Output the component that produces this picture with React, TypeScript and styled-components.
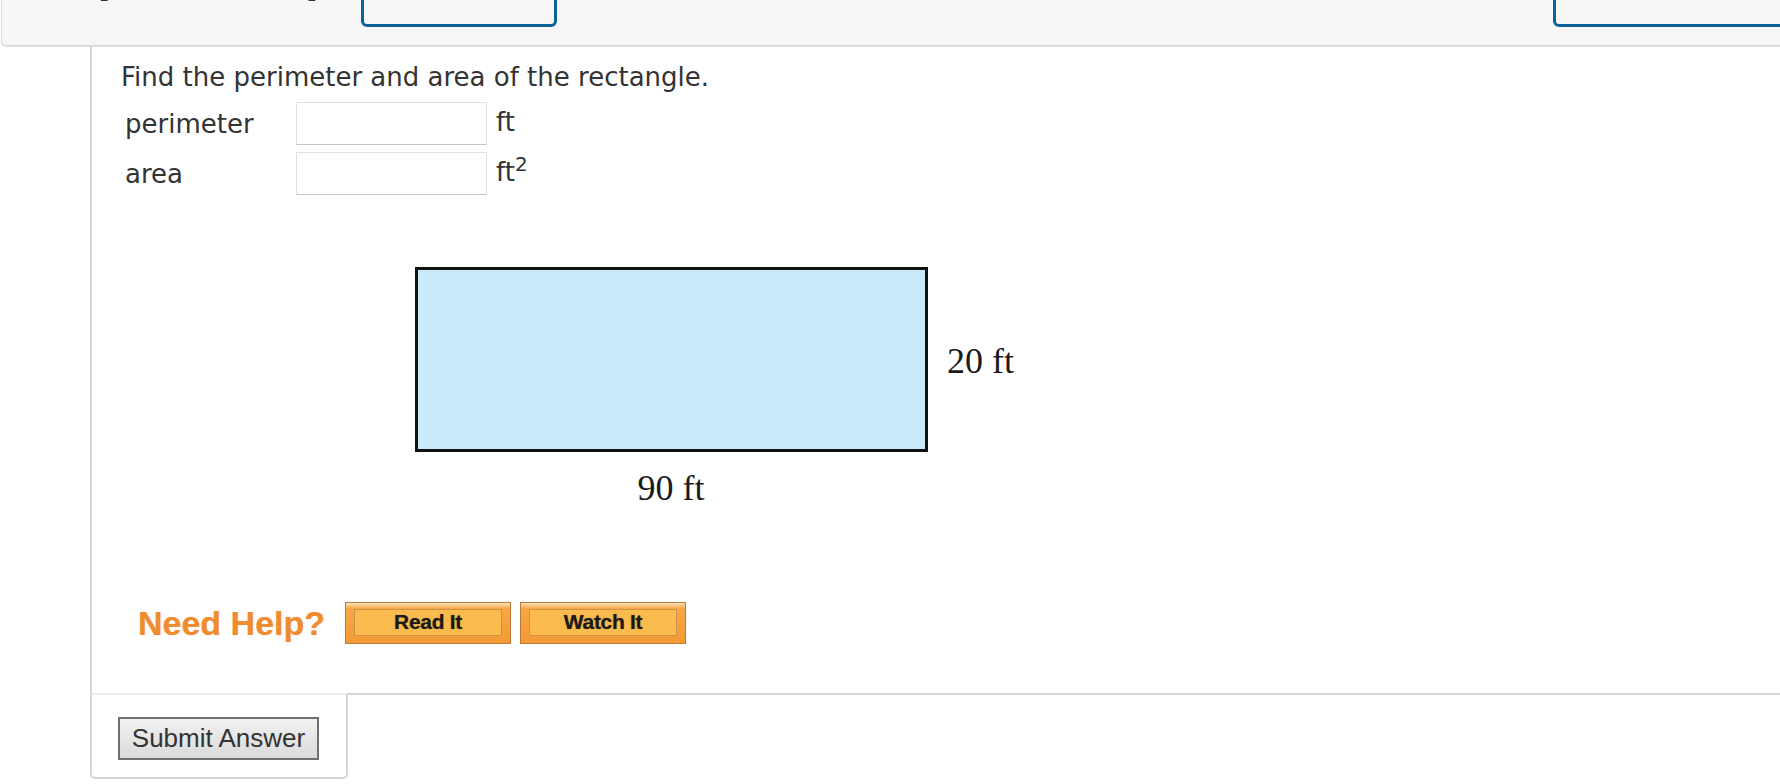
import React from 'react';
import styled, { createGlobalStyle } from 'styled-components';

const GlobalStyle = createGlobalStyle`
  html, body {
    margin: 0;
    padding: 0;
    background: #ffffff;
  }
  #root {
    width: 1780px;
    height: 784px;
    overflow: hidden;
  }
`;

const Page = styled.div`
  box-sizing: border-box;
  width: 1780px;
  height: 784px;
  overflow: hidden;
  padding-left: 1px;
  font-family: 'DejaVu Sans', Verdana, sans-serif;
  color: #333333;
`;

const Header = styled.header`
  box-sizing: border-box;
  width: 1900px;
  height: 47px;
  padding: 0 0 18px 97px;
  background: #f6f6f6;
  border-left: 1px solid #dcdcdc;
  border-bottom: 2px solid #dcdcdc;
  border-bottom-left-radius: 5px;
  display: flex;
  align-items: flex-end;
  overflow: hidden;
`;

const HeaderText = styled.div<{ $width: number; $color: string; $gap: number }>`
  flex-shrink: 0;
  width: ${({ $width }) => $width}px;
  margin-right: ${({ $gap }) => $gap}px;
  margin-bottom: 25px;
  display: flex;
  justify-content: space-between;
  font-size: 22px;
  line-height: 22px;
  color: ${({ $color }) => $color};
  white-space: nowrap;
  b {
    color: #333333;
    margin-bottom: -3px;
  }
`;

const HeaderButton = styled.div<{ $width: number; $gap: number }>`
  flex-shrink: 0;
  box-sizing: border-box;
  width: ${({ $width }) => $width}px;
  height: 60px;
  margin-right: ${({ $gap }) => $gap}px;
  border: 3px solid #0b6397;
  border-radius: 6px;
  display: flex;
  align-items: flex-end;
  justify-content: center;
  padding-bottom: 23px;
  font-size: 22px;
  line-height: 22px;
  color: #a9cde2;
  letter-spacing: 6px;
`;

const Main = styled.div`
  margin-left: 89px;
  display: flex;
  flex-direction: column;
`;

const ContentBox = styled.section`
  box-sizing: border-box;
  height: 646px;
  padding: 15px 0 0 29px;
  border-left: 2px solid #d4d4d4;
`;

const Question = styled.div`
  font-size: 26px;
  line-height: 30px;
  color: #333333;
`;

const AnswerRow = styled.div<{ $top: number }>`
  display: flex;
  align-items: center;
  height: 43px;
  margin-top: ${({ $top }) => $top}px;
`;

const Label = styled.div`
  box-sizing: border-box;
  width: 175px;
  padding-left: 4px;
  font-size: 26px;
  line-height: 30px;
`;

const AnswerInput = styled.input`
  box-sizing: border-box;
  width: 191px;
  height: 43px;
  margin: 0;
  border: 1px solid #e0e0e0;
  border-bottom-color: #c4c4c4;
  border-radius: 1px;
  background: #ffffff;
  outline: none;
`;

const Unit = styled.div`
  margin-left: 9px;
  padding-bottom: 3px;
  font-size: 26px;
  line-height: 30px;
  sup {
    font-size: 20px;
    line-height: 0;
    vertical-align: 10px;
  }
`;

const Figure = styled.svg`
  display: block;
  margin: 72px 0 0 294px;
  font-family: 'Liberation Serif', 'Times New Roman', serif;
`;

const HelpRow = styled.div`
  display: flex;
  align-items: center;
  height: 43px;
  margin: 84px 0 0 17px;
`;

const NeedHelp = styled.span`
  margin-right: 20px;
  font-family: 'Liberation Sans', Arial, sans-serif;
  font-weight: bold;
  font-size: 34px;
  line-height: 36px;
  color: #f08c30;
  text-shadow: 0 0 1px rgba(240, 140, 48, 0.6);
`;

const HelpButton = styled.button`
  box-sizing: border-box;
  width: 166px;
  height: 42px;
  margin: 0 9px 0 0;
  padding: 6px 8px 7px;
  display: flex;
  border: 1px solid #b97a3b;
  background: linear-gradient(#fde3b8 0%, #f7a646 14%, #f59a33 100%);
  cursor: pointer;
`;

const HelpButtonFace = styled.span`
  flex: 1;
  display: flex;
  align-items: center;
  justify-content: center;
  border: 1px solid #c9944a;
  background: #fbbb4e;
  font-family: 'Liberation Sans', Arial, sans-serif;
  font-weight: bold;
  font-size: 21px;
  letter-spacing: -0.3px;
  color: #1c1a14;
  text-shadow: 0 0 1px rgba(0, 0, 0, 0.5);
`;

const BottomRow = styled.div`
  display: flex;
`;

const SubmitBox = styled.div`
  box-sizing: border-box;
  width: 258px;
  height: 86px;
  padding: 22px 0 0 26px;
  border: 2px solid #d4d4d4;
  border-top-color: #eeeeee;
  border-radius: 0 0 5px 5px;
`;

const Filler = styled.div`
  flex: 1;
  border-top: 2px solid #d6d6d6;
`;

const SubmitButton = styled.button`
  box-sizing: border-box;
  width: 201px;
  height: 43px;
  margin: 0;
  padding: 0;
  border: 2px solid #707070;
  background: linear-gradient(#f2f2f2, #dadada);
  font-family: 'Liberation Sans', Arial, sans-serif;
  font-size: 26px;
  color: #333333;
  cursor: pointer;
`;

export default function App() {
  return (
    <Page>
      <GlobalStyle />
      <Header>
        <HeaderText $width={218} $color="#a8a8a8" $gap={44}>
          <b>[</b>
          <span>–/1 Points</span>
          <b>]</b>
        </HeaderText>
        <HeaderButton $width={196} $gap={267}>DETAILS</HeaderButton>
        <HeaderText $width={467} $color="#b4b4b4" $gap={262}>
          <span>SPRECALC7 1.1.009.</span>
          <span>MY NOTES</span>
        </HeaderText>
        <HeaderButton $width={300} $gap={0}>ASK</HeaderButton>
      </Header>
      <Main>
        <ContentBox>
          <Question>Find the perimeter and area of the rectangle.</Question>
          <AnswerRow $top={10}>
            <Label>perimeter</Label>
            <AnswerInput type="text" />
            <Unit>ft</Unit>
          </AnswerRow>
          <AnswerRow $top={7}>
            <Label>area</Label>
            <AnswerInput type="text" />
            <Unit>
              ft<sup>2</sup>
            </Unit>
          </AnswerRow>
          <Figure width="620" height="250" viewBox="0 0 620 250">
            <rect x="1.5" y="1.5" width="510" height="182" fill="#c8eaf9" stroke="#111111" strokeWidth="3" />
            <text x="532" y="106" fontSize="36" fill="#1a1a1a">20 ft</text>
            <text x="256" y="233" fontSize="36" fill="#1a1a1a" textAnchor="middle">90 ft</text>
          </Figure>
          <HelpRow>
            <NeedHelp>Need Help?</NeedHelp>
            <HelpButton>
              <HelpButtonFace>Read It</HelpButtonFace>
            </HelpButton>
            <HelpButton>
              <HelpButtonFace>Watch It</HelpButtonFace>
            </HelpButton>
          </HelpRow>
        </ContentBox>
        <BottomRow>
          <SubmitBox>
            <SubmitButton>Submit Answer</SubmitButton>
          </SubmitBox>
          <Filler />
        </BottomRow>
      </Main>
    </Page>
  );
}
